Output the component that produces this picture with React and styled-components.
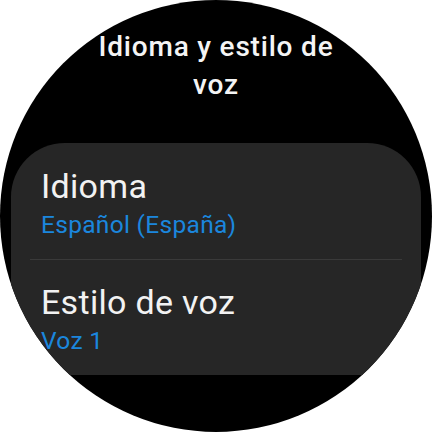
import React from 'react'
import styled, { createGlobalStyle } from 'styled-components'

const GlobalStyle = createGlobalStyle`
	html, body {
		margin: 0;
		padding: 0;
		background: #ffffff;
	}
	body {
		font-family: Roboto, "Noto Sans", "Liberation Sans", sans-serif;
	}
`

const Watch = styled.div`
	width: 432px;
	height: 432px;
	border-radius: 50%;
	background: #000;
	overflow: hidden;
	display: flex;
	flex-direction: column;
	align-items: center;
`

const Title = styled.h1`
	margin: 28px 0 0;
	width: 260px;
	text-align: center;
	color: #f4f4f4;
	font-size: 28px;
	font-weight: 500;
	letter-spacing: 0.8px;
	line-height: 37.5px;
`

const Card = styled.div`
	align-self: stretch;
	margin: 40px 11px 0;
	background: #262626;
	border-radius: 54px 54px 0 0;
	display: flex;
	flex-direction: column;
`

const Item = styled.div`
	padding: ${props => props.first ? '23px' : '22px'} 30px 20px;
	display: flex;
	flex-direction: column;
	gap: 5px;
`

const Label = styled.div`
	color: #f2f2f2;
	font-size: 34px;
	letter-spacing: 0.3px;
	line-height: 40px;
`

const Value = styled.div`
	color: #1b86dd;
	font-size: 24.5px;
	letter-spacing: 0.3px;
	line-height: 28px;
`

const Divider = styled.div`
	height: 1px;
	margin: 0 19px;
	background: #3a3a3a;
`

const settings = [
	{ label: 'Idioma', value: 'Español (España)' },
	{ label: 'Estilo de voz', value: 'Voz 1' }
]

const App = () => (
	<>
		<GlobalStyle />
		<Watch>
			<Title>Idioma y estilo de voz</Title>
			<Card>
				{settings.map((item, index) => (
					<React.Fragment key={item.label}>
						{index > 0 && <Divider />}
						<Item first={index === 0}>
							<Label>{item.label}</Label>
							<Value>{item.value}</Value>
						</Item>
					</React.Fragment>
				))}
			</Card>
		</Watch>
	</>
)

export default App
